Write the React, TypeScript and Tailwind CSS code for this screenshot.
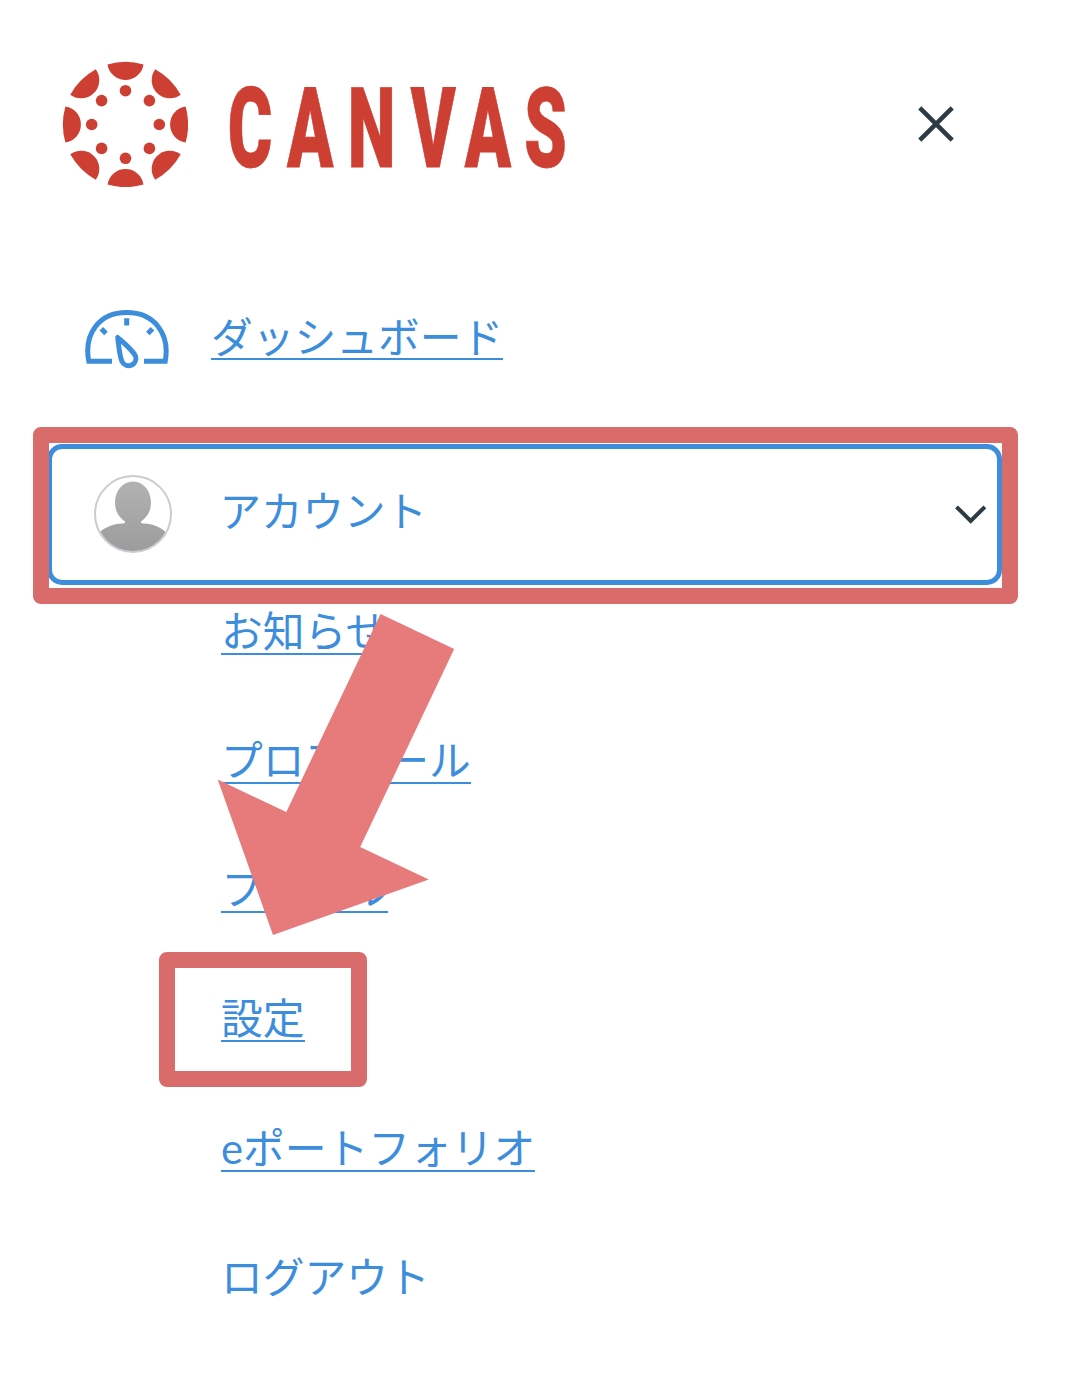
import React from "react";

const outerLobes = [0, 45, 90, 135, 180, 225, 270, 315];

function CanvasMark() {
  return (
    <svg className="block h-[126px] w-[126px] shrink-0" viewBox="-63.5 -63.5 126 126" fill="#cd3f33">
      {outerLobes.map((angle) => (
        <g key={angle} transform={`rotate(${angle})`}>
          <path d="M-18 -60.1Q0 -65.2 18 -60.1A18.2 18.2 0 0 1 -18 -60.1Z" />
          <circle cx="0" cy="-33.8" r="5.8" />
        </g>
      ))}
    </svg>
  );
}

function CanvasWordmark() {
  return (
    <svg className="ml-[26px] block h-[148px] w-[370px]" viewBox="214 49 370 148" aria-label="CANVAS">
      <text
        transform="scale(.61 1)"
        x="373.500 470.500 570 673.500 761.800 859.500"
        y="166"
        fontSize="111.500"
        fill="#cd3f33"
        stroke="#cd3f33"
        strokeWidth=".8"
        className="font-[Roboto] font-black"
      >
        CANVAS
      </text>
    </svg>
  );
}

function DashboardIcon() {
  return (
    <svg className="block h-[60px] w-[84px] shrink-0" viewBox="85 310 84 60" fill="none" stroke="#3d8ddd" strokeWidth="5">
      <path d="M112 361.200H88.800C83.500 334 99 312.600 126.700 312.600C154.500 312.600 170.200 334 165.200 361.200H144" />
      <path d="M126.700 318.300V325.500M101.300 328.800L106 333.500M152.500 328.800L147.800 333.500" />
      <path d="M117.700 337.500C119 348 119.600 356 122 361.500A7.300 7.300 0 0 0 135.500 356C132.500 350 124.500 343.500 117.700 337.500Z" strokeLinejoin="round" />
    </svg>
  );
}

function Avatar() {
  return (
    <svg className="block h-[78px] w-[78px] shrink-0" viewBox="94 475 78 78">
      <defs>
        <linearGradient id="shade" x1="0" y1="481" x2="0" y2="552" gradientUnits="userSpaceOnUse">
          <stop offset="0" stopColor="#b2b2b2" />
          <stop offset="1" stopColor="#9c9c9c" />
        </linearGradient>
        <clipPath id="disc">
          <circle cx="133" cy="514" r="37.500" />
        </clipPath>
      </defs>
      <path
        clipPath="url(#disc)"
        fill="url(#shade)"
        d="M133 481.500C143 481.500 151 490 151 503C151 511 147 517.500 141 521.500C140.500 522.800 142 523.500 144 523.600C153 524 160 527 165.500 532V556H100V532C106 527 113 524 122 523.600C124 523.500 125.500 522.800 125 521.500C119 517.500 115 511 115 503C115 490 123 481.500 133 481.500Z"
      />
      <circle cx="133" cy="514" r="38" fill="none" stroke="#c7cdd1" strokeWidth="2" />
    </svg>
  );
}

const linkText = "block w-fit h-[46px] whitespace-nowrap text-[41.75px] leading-[44px]";

function NavLink({ children, underlined = true }: { children: React.ReactNode; underlined?: boolean }) {
  return (
    <a className={underlined ? `${linkText} border-b-2 border-[#3d8ddd]` : linkText}>{children}</a>
  );
}

export default function App() {
  return (
    <div className="relative h-[1384px] w-[1080px] overflow-hidden bg-white font-['Lato','Noto_Sans_CJK_JP',sans-serif] text-[#3d8ddd]">
      <header className="flex h-[248px] items-center pr-[126px] pl-[62px]">
        <CanvasMark />
        <CanvasWordmark />
        <svg className="ml-auto block h-[36px] w-[36px]" viewBox="0 0 36 36" stroke="#2d3b45" strokeWidth="4.500">
          <path d="M1.800 1.800L34.200 34.200M34.200 1.800L1.800 34.200" />
        </svg>
      </header>

      <nav>
        <div className="flex h-[196px] items-start pt-[62px] pl-[85px]">
          <DashboardIcon />
          <div className="ml-[42px] pt-[4px]">
            <a className="block h-[46px] w-fit border-b-2 border-[#3d8ddd] text-[41.750px] leading-[46px] whitespace-nowrap">
              ダッシュボード
            </a>
          </div>
        </div>

        <button className="ml-[47px] flex h-[141px] w-[955px] items-center rounded-[15px] border-[5px] border-[#3d8ddd] pr-[10px] pb-px pl-[42px]">
          <Avatar />
          <span className="ml-[47.5px] block h-[50px] text-[41.5px] leading-[44px]">アカウント</span>
          <svg className="ml-auto block h-[20px] w-[32px]" viewBox="0.300 -0.500 32 20" fill="none" stroke="#2d3b45" strokeWidth="4">
            <path d="M1.800 2.300L16 16.500L30.200 2.300" />
          </svg>
        </button>

        <div className="flex flex-col gap-[83px] pt-[24px] pl-[221px]">
          <NavLink>お知らせ</NavLink>
          <NavLink>プロフィール</NavLink>
          <NavLink>ファイル</NavLink>
          <NavLink>設定</NavLink>
          <div className="flex flex-col gap-[83px] pt-px">
            <NavLink>eポートフォリオ</NavLink>
            <NavLink underlined={false}>ログアウト</NavLink>
          </div>
        </div>
      </nav>

      <div className="absolute top-[427px] left-[33px] h-[177px] w-[985px] rounded-[8px] border-[16px] border-[#d96b6b]" />
      <div className="absolute top-[952px] left-[159px] h-[135px] w-[208px] rounded-[8px] border-[16px] border-[#d96b6b]" />
      <svg className="absolute top-[610px] left-[210px] h-[330px] w-[250px]" viewBox="210 610 250 330" fill="#e77a7a">
        <path d="M380.500 614L454.200 649L360.200 847L428.700 879.500L273 935L217.700 779.500L286.300 812Z" />
      </svg>
    </div>
  );
}
